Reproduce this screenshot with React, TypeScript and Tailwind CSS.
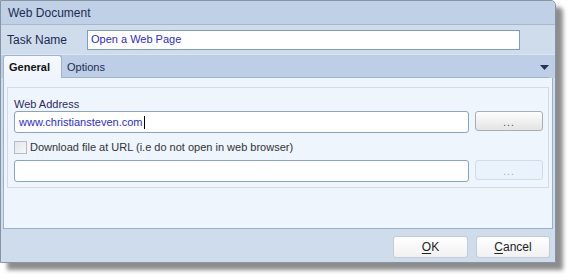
const FONT = "font-['Liberation_Sans',Arial,sans-serif]";

function DotsButton({ disabled }: { disabled?: boolean }) {
  return (
    <div
      className={
        disabled
          ? "flex h-[20px] w-[68px] items-center justify-center rounded-[3px] border border-[#cddbeb] bg-[#eaf2fc] pt-[4px] text-[10px] leading-none tracking-[1px] text-[#9aa6b8]"
          : "flex h-[20px] w-[68px] items-center justify-center rounded-[3px] border border-[#a9adb3] bg-gradient-to-b from-[#fdfdfd] to-[#e4e4e4] pt-[4px] text-[10px] leading-none tracking-[1px] text-[#4a3a5a]"
      }
    >
      ...
    </div>
  );
}

function TextBox({ value, cursor }: { value?: string; cursor?: boolean }) {
  return (
    <div className="flex h-[22px] w-[455px] items-center rounded-[3px] border border-[#89a3c6] bg-white pl-[4px] text-[11px] text-[#2b2bd8]">
      {value}
      {cursor && <span className="ml-[1px] h-[13px] w-[1px] bg-black" />}
    </div>
  );
}

function FooterButton({ hotkey, rest }: { hotkey: string; rest: string }) {
  return (
    <div className="flex h-[22px] items-center justify-center rounded-[3px] border border-[#c6ccd4] bg-gradient-to-b from-white to-[#f1f1f1] text-[12px] text-[#222]">
      <span className="underline underline-offset-2">{hotkey}</span>
      {rest}
    </div>
  );
}

export default function App() {
  return (
    <div className={`h-[280px] w-[571px] bg-white ${FONT}`}>
      <div className="flex h-[263px] w-[556px] flex-col rounded-tr-[5px] border border-[#8893a3] bg-[#cfdcec] shadow-[7px_7px_4px_rgba(0,0,0,0.45)]">
        {/* title bar */}
        <div className="flex h-[24px] items-center rounded-tr-[5px] border-b border-[#a7b7cc] bg-[#bfd0e7] pl-[7px] text-[12px] text-[#1e2b4f]">
          Web Document
        </div>

        {/* task name */}
        <div className="flex h-[29px] items-center bg-[#cfdcec] pl-[6px]">
          <span className="w-[80px] text-[12px] text-[#1b2a55]">Task Name</span>
          <div className="flex h-[20px] w-[433px] items-center border border-[#7f9bbd] bg-white pl-[3px] text-[11px] text-[#2b2bd8]">
            Open a Web Page
          </div>
        </div>

        {/* tab strip */}
        <div className="flex h-[24px] items-end border-t border-[#dce5f1] bg-[#bdcee6] pl-[2px] pr-[6px]">
          <div className="flex h-[23px] w-[59px] items-center rounded-t-[3px] border border-b-0 border-[#9fb3cc] bg-gradient-to-b from-[#f6f9fd] to-[#eef5fd] pl-[5px] text-[11px] font-bold text-[#111]">
            General
          </div>
          <div className="flex h-[21px] w-[60px] items-center border-b border-[#9fb3cc] pl-[5px] text-[11px] text-[#1e2d4f]">
            Options
          </div>
          <div className="flex h-[21px] flex-1 items-center justify-end border-b border-[#9fb3cc]">
            <svg width="9" height="5" viewBox="0 0 9 5">
              <path d="M0 0h9L4.5 5z" fill="#1f3552" />
            </svg>
          </div>
        </div>

        {/* content panel */}
        <div className="mx-[2px] flex h-[151px] flex-col border-x border-b border-[#9cb0c9] bg-[#eef5fd] px-[3px] pt-[9px]">
          <div className="flex h-[101px] flex-col border border-[#d5dae0] pl-[6px] pt-[8px]">
            <span className="h-[15px] pt-[2px] text-[11px] leading-[13px] text-[#2a2a66]">Web Address</span>
            <div className="flex items-start gap-[6px]">
              <TextBox value="www.christiansteven.com" cursor />
              <DotsButton />
            </div>
            <div className="mt-[7px] flex h-[14px] items-center gap-[3px]">
              <div className="h-[13px] w-[13px] border border-[#b7bcc3] bg-gradient-to-br from-[#e4e6e9] to-[#f6f7f8]" />
              <span className="text-[11px] text-[#333]">
                Download file at URL (i.e do not open in web browser)
              </span>
            </div>
            <div className="mt-[6px] flex items-start gap-[6px]">
              <TextBox />
              <DotsButton disabled />
            </div>
          </div>
        </div>

        {/* footer */}
        <div className="flex flex-1 items-start justify-end gap-[8px] bg-[#cfdcec] pr-[5px] pt-[7px]">
          <div className="w-[75px]">
            <FooterButton hotkey="O" rest="K" />
          </div>
          <div className="w-[74px]">
            <FooterButton hotkey="C" rest="ancel" />
          </div>
        </div>
      </div>
    </div>
  );
}
